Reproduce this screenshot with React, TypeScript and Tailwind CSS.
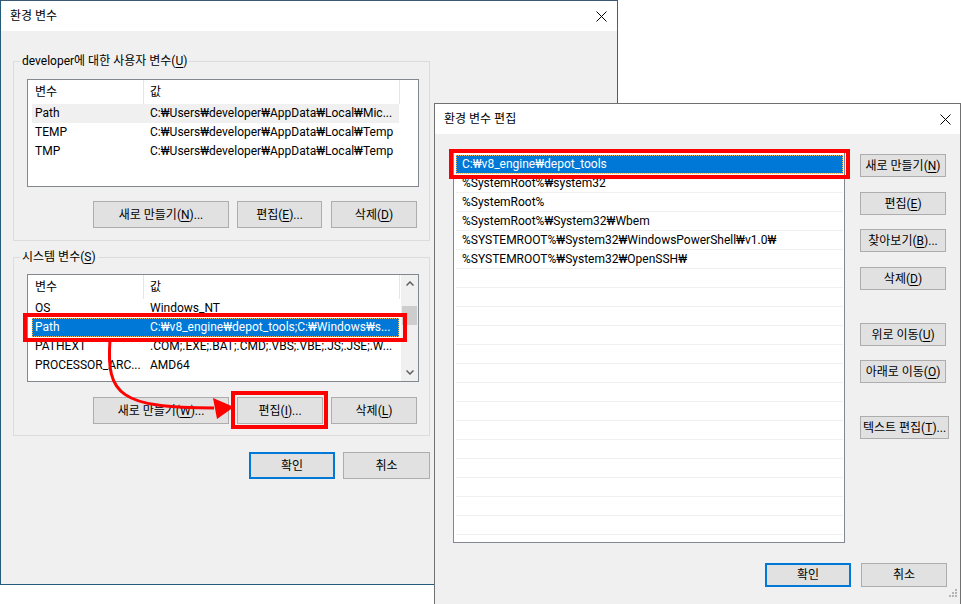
import type { ReactNode } from "react";

interface VarRow {
  name: string;
  value: string;
  state?: "selected" | "inactive" | "clipped";
}

const userVars: VarRow[] = [
  { name: "Path", value: "C:₩Users₩developer₩AppData₩Local₩Mic...", state: "inactive" },
  { name: "TEMP", value: "C:₩Users₩developer₩AppData₩Local₩Temp" },
  { name: "TMP", value: "C:₩Users₩developer₩AppData₩Local₩Temp" },
];

const systemVars: VarRow[] = [
  { name: "OS", value: "Windows_NT" },
  { name: "Path", value: "C:₩v8_engine₩depot_tools;C:₩Windows₩s...", state: "selected" },
  { name: "PATHEXT", value: ".COM;.EXE;.BAT;.CMD;.VBS;.VBE;.JS;.JSE;.W..." },
  { name: "PROCESSOR_ARC...", value: "AMD64" },
  { name: "PSModulePath", value: "%ProgramFiles%₩WindowsPowerShell₩Modules;...", state: "clipped" },
];

const pathEntries = [
  "C:₩v8_engine₩depot_tools",
  "%SystemRoot%₩system32",
  "%SystemRoot%",
  "%SystemRoot%₩System32₩Wbem",
  "%SYSTEMROOT%₩System32₩WindowsPowerShell₩v1.0₩",
  "%SYSTEMROOT%₩System32₩OpenSSH₩",
];

// 빈 줄까지 채워서 리스트 높이만큼 그린다
const pathRows = [...pathEntries, ...Array.from({ length: 15 }, () => "")];

// 괄호 안 단축키 글자 밑줄
function Mn({ k }: { k: string }) {
  return <span className="underline underline-offset-[2px]">{k}</span>;
}

function WinButton({
  children,
  className = "",
  primary = false,
}: {
  children: ReactNode;
  className?: string;
  primary?: boolean;
}) {
  return (
    <button
      type="button"
      className={`flex shrink-0 items-center justify-center whitespace-nowrap bg-[#e1e1e1] text-[12px] leading-none text-black ${
        primary ? "border-2 border-[#0078d7]" : "border border-[#adadad]"
      } ${className}`}
    >
      {children}
    </button>
  );
}

function CloseIcon() {
  return (
    <svg width="11" height="11" viewBox="0 0 11 11" className="shrink-0">
      <path d="M0.5 0.5 L10.5 10.5 M10.5 0.5 L0.5 10.5" stroke="#000" strokeWidth="1" />
    </svg>
  );
}

function Chevron({ up = false }: { up?: boolean }) {
  return (
    <svg width="8" height="5" viewBox="0 0 8 5">
      <path
        d={up ? "M0.5 4.5 L4 1 L7.5 4.5" : "M0.5 0.5 L4 4 L7.5 0.5"}
        stroke="#606060"
        strokeWidth="1.5"
        fill="none"
      />
    </svg>
  );
}

function ScrollBar() {
  return (
    <div className="flex w-[17px] shrink-0 flex-col bg-[#f0f0f0]">
      <div className="flex h-[17px] items-center justify-center">
        <Chevron up />
      </div>
      <div className="flex-1 px-[1px] pt-[14px]">
        <div className="h-[19px] bg-[#cdcdcd]" />
      </div>
      <div className="flex h-[17px] items-center justify-center">
        <Chevron />
      </div>
    </div>
  );
}

function rowTone(state: VarRow["state"]) {
  if (state === "selected") {
    return "bg-[#0078d7] text-white outline-1 -outline-offset-1 outline-dotted outline-[#f2b45c]";
  }
  if (state === "inactive") return "bg-[#f0f0f0]";
  if (state === "clipped") return "pt-[3px]";
  return "";
}

function VarList({ rows, scroll = false }: { rows: VarRow[]; scroll?: boolean }) {
  return (
    <div className="flex h-[108px] w-[392px] overflow-hidden border border-[#828790] bg-white">
      <div className="flex-1 overflow-hidden pl-[4px]">
        <div className="flex h-[24px] leading-[24px]">
          <div className="w-[112px] border-r border-[#e5e5e5] pl-[3px]">변수</div>
          <div className="w-[256px] border-r border-[#e5e5e5] pl-[6px]">값</div>
        </div>
        {rows.map((row) => (
          <div key={row.name} className={`flex h-[19px] w-[367px] leading-[19px] ${rowTone(row.state)}`}>
            <div className="w-[112px] shrink-0 overflow-hidden whitespace-nowrap pl-[3px]">{row.name}</div>
            <div className="flex-1 overflow-hidden whitespace-nowrap pl-[6px]">{row.value}</div>
          </div>
        ))}
      </div>
      {scroll && <ScrollBar />}
    </div>
  );
}

function GroupBox({ title, children, className = "" }: { title: ReactNode; children: ReactNode; className?: string }) {
  return (
    <fieldset className={`w-[417px] border border-[#dcdcdc] ${className}`}>
      <legend className="ml-[6px] px-[2px] leading-[16px]">{title}</legend>
      <div className="pl-[13px]">{children}</div>
    </fieldset>
  );
}

function EnvVarsDialog() {
  return (
    <div className="absolute left-0 top-0 flex h-[585px] w-[618px] flex-col border border-b-[#245b78] border-l-[#245b78] border-r-[#5a5a5a] border-t-[#3d5872]">
      <div className="flex h-[30px] items-center justify-between bg-white pl-[9px] pr-[10px]">
        <span>환경 변수</span>
        <CloseIcon />
      </div>
      <div className="flex-1 bg-[#f0f0f0] pl-[12px] pt-[22px]">
        <div className="flex w-[417px] flex-col">
          <GroupBox
            title={
              <>
                developer에 대한 사용자 변수(<Mn k="U" />)
              </>
            }
            className="pb-[12px]"
          >
            <div className="mt-[10px]">
              <VarList rows={userVars} />
            </div>
            <div className="ml-[66px] mt-[14px] flex">
              <WinButton className="h-[27px] w-[136px]">
                새로 만들기(<Mn k="N" />)...
              </WinButton>
              <WinButton className="ml-[8px] h-[27px] w-[85px]">
                편집(<Mn k="E" />)...
              </WinButton>
              <WinButton className="ml-[9px] h-[27px] w-[86px]">
                삭제(<Mn k="D" />)
              </WinButton>
            </div>
          </GroupBox>

          <GroupBox
            title={
              <>
                시스템 변수(<Mn k="S" />)
              </>
            }
            className="mt-[8px] pb-[11px]"
          >
            <div className="mt-[9px]">
              <VarList rows={systemVars} scroll />
            </div>
            <div className="ml-[66px] mt-[15px] flex">
              <WinButton className="h-[27px] w-[136px]">
                새로 만들기(<Mn k="W" />)...
              </WinButton>
              <WinButton className="ml-[8px] h-[27px] w-[86px]">
                편집(<Mn k="I" />)...
              </WinButton>
              <WinButton className="ml-[8px] h-[27px] w-[86px]">
                삭제(<Mn k="L" />)
              </WinButton>
            </div>
          </GroupBox>

          <div className="mt-[16px] flex justify-end">
            <WinButton primary className="h-[27px] w-[86px]">
              확인
            </WinButton>
            <WinButton className="ml-[8px] h-[27px] w-[87px]">취소</WinButton>
          </div>
        </div>
      </div>
    </div>
  );
}

function EditPathDialog() {
  return (
    <div className="absolute left-[434px] top-[103px] flex h-[502px] w-[527px] flex-col border border-[#707070]">
      <div className="flex h-[30px] items-center justify-between bg-white pl-[9px] pr-[9px]">
        <span>환경 변수 편집</span>
        <CloseIcon />
      </div>
      <div className="relative flex flex-1 flex-col bg-[#f0f0f0] pl-[18px] pt-[16px]">
        <div className="flex">
          <div className="h-[393px] w-[392px] overflow-hidden border border-[#828790] bg-white pl-[2px] pr-[1px] pt-[4px]">
            {pathRows.map((entry, i) => (
              <div
                key={i}
                className={`h-[19px] overflow-hidden whitespace-nowrap border-b border-[#f0f0f0] pl-[6px] leading-[18px] ${
                  i === 0 ? "bg-[#0078d7] text-white outline-1 -outline-offset-1 outline-dotted outline-[#f2b45c]" : ""
                }`}
              >
                {entry}
              </div>
            ))}
          </div>
          <div className="ml-[15px] flex flex-col pt-[4px]">
            <WinButton className="h-[23px] w-[86px]">
              새로 만들기(<Mn k="N" />)
            </WinButton>
            <WinButton className="mt-[15px] h-[23px] w-[86px]">
              편집(<Mn k="E" />)
            </WinButton>
            <WinButton className="mt-[14px] h-[23px] w-[86px]">
              찾아보기(<Mn k="B" />)...
            </WinButton>
            <WinButton className="mt-[15px] h-[23px] w-[86px]">
              삭제(<Mn k="D" />)
            </WinButton>
            <WinButton className="mt-[33px] h-[23px] w-[86px]">
              위로 이동(<Mn k="U" />)
            </WinButton>
            <WinButton className="mt-[14px] h-[23px] w-[86px]">
              아래로 이동(<Mn k="O" />)
            </WinButton>
            <WinButton className="mt-[33px] h-[23px] w-[89px]">
              텍스트 편집(<Mn k="T" />)...
            </WinButton>
          </div>
        </div>
        <div className="ml-[312px] mt-[20px] flex">
          <WinButton primary className="h-[24px] w-[86px]">
            확인
          </WinButton>
          <WinButton className="ml-[10px] h-[24px] w-[86px]">취소</WinButton>
        </div>
        {/* 크기 조절 손잡이 */}
        <svg width="9" height="9" viewBox="0 0 9 9" className="absolute bottom-[6px] right-[2px]">
          {[
            [6, 0],
            [3, 3],
            [6, 3],
            [0, 6],
            [3, 6],
            [6, 6],
          ].map(([x, y]) => (
            <rect key={`${x}-${y}`} x={x} y={y} width="2" height="2" fill="#b4b4b4" />
          ))}
        </svg>
      </div>
    </div>
  );
}

export default function App() {
  return (
    <div className="relative h-[604px] w-[961px] overflow-hidden bg-white font-['Roboto','DejaVu_Sans','Noto_Sans_CJK_KR',sans-serif] text-[12px] text-black">
      <EnvVarsDialog />
      <EditPathDialog />

      {/* 강조 표시 */}
      <div className="absolute left-[23px] top-[313px] h-[29px] w-[384px] border-4 border-[#ff0000]" />
      <div className="absolute left-[231px] top-[391px] h-[38px] w-[97px] border-4 border-[#ff0000]" />
      <div className="absolute left-[449px] top-[149px] h-[30px] w-[401px] border-4 border-[#ff0000]" />
      <svg className="pointer-events-none absolute left-0 top-0" width="961" height="604">
        <path d="M110 340 C106 395, 120 408, 214 408" stroke="#ff0000" strokeWidth="3" fill="none" />
        <polygon points="234,407 213,398 217,419" fill="#ff0000" />
      </svg>
    </div>
  );
}
